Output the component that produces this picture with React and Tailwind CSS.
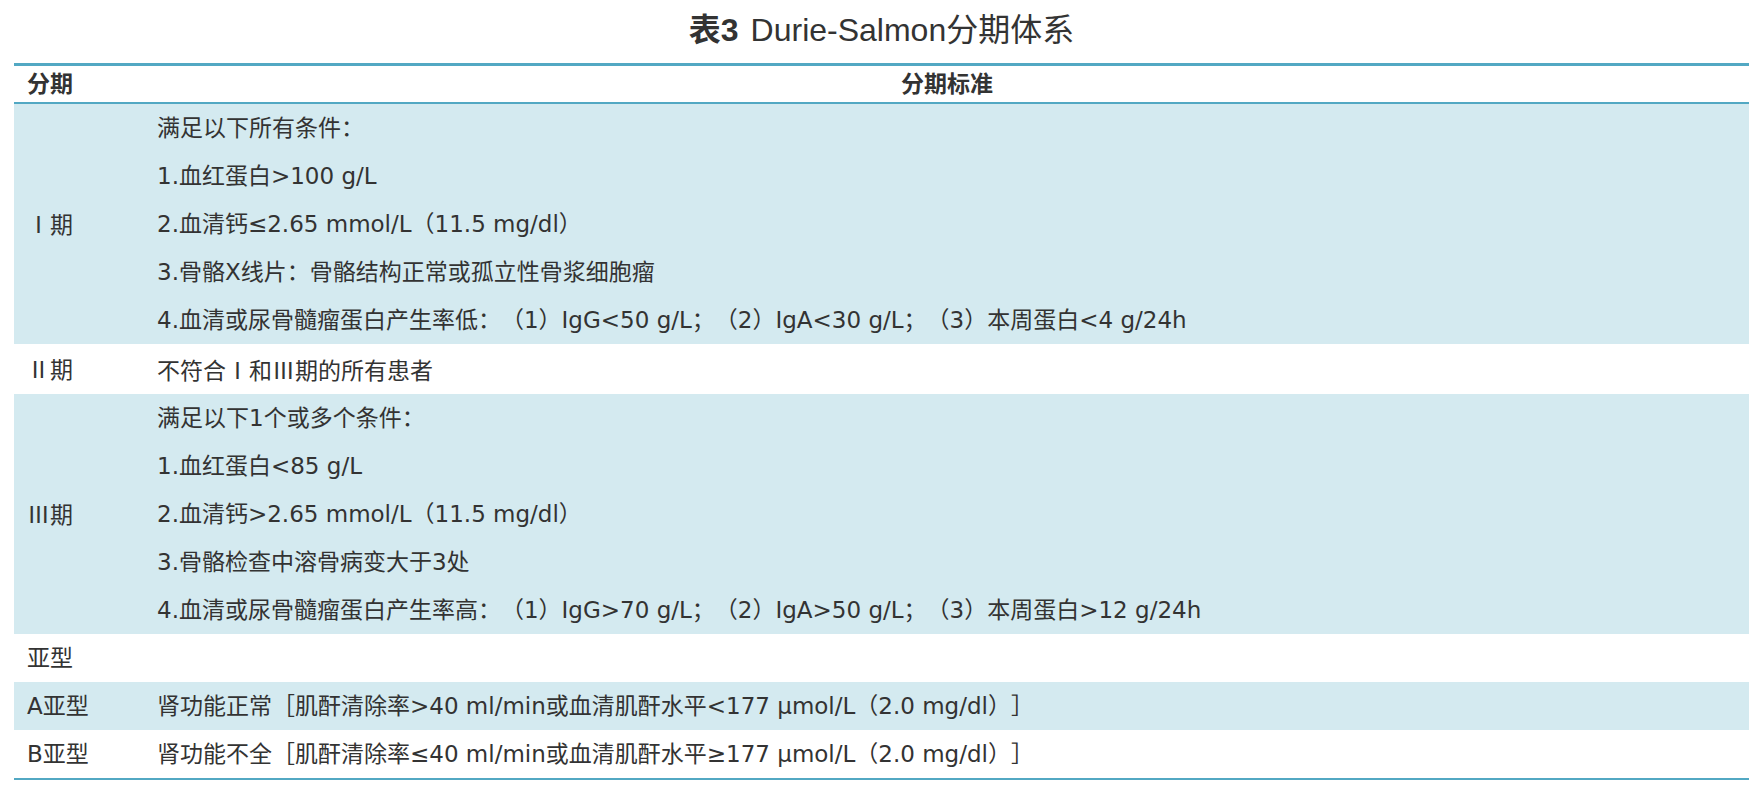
const BODY_FONT = '"DejaVu Sans", "Noto Sans CJK SC", sans-serif'
const CJK_FONT = '"Noto Sans CJK SC", sans-serif'
const TITLE_FONT = '"Liberation Sans", "Noto Sans CJK SC", sans-serif'

const ROWS = [
  {
    stage: 'Ⅰ期',
    shade: true,
    lines: [
      '满足以下所有条件：',
      '1.血红蛋白>100 g/L',
      '2.血清钙≤2.65 mmol/L（11.5 mg/dl）',
      '3.骨骼X线片：骨骼结构正常或孤立性骨浆细胞瘤',
      '4.血清或尿骨髓瘤蛋白产生率低：（1）IgG<50 g/L；（2）IgA<30 g/L；（3）本周蛋白<4 g/24h',
    ],
  },
  { stage: 'Ⅱ期', shade: false, lines: ['不符合Ⅰ和Ⅲ期的所有患者'] },
  {
    stage: 'Ⅲ期',
    shade: true,
    lines: [
      '满足以下1个或多个条件：',
      '1.血红蛋白<85 g/L',
      '2.血清钙>2.65 mmol/L（11.5 mg/dl）',
      '3.骨骼检查中溶骨病变大于3处',
      '4.血清或尿骨髓瘤蛋白产生率高：（1）IgG>70 g/L；（2）IgA>50 g/L；（3）本周蛋白>12 g/24h',
    ],
  },
  { stage: '亚型', shade: false, lines: [''] },
  {
    stage: 'A亚型',
    shade: true,
    lines: ['肾功能正常［肌酐清除率>40 ml/min或血清肌酐水平<177 μmol/L（2.0 mg/dl）］'],
  },
  {
    stage: 'B亚型',
    shade: false,
    lines: ['肾功能不全［肌酐清除率≤40 ml/min或血清肌酐水平≥177 μmol/L（2.0 mg/dl）］'],
  },
]

// roman numerals come from the CJK font so they keep its spacing
function Text({ value }) {
  return value.split(/([ⅠⅡⅢ])/).map((part, i) =>
    /[ⅠⅡⅢ]/.test(part) ? (
      <span key={i} style={{ fontFamily: CJK_FONT }}>
        {part}
      </span>
    ) : (
      part
    )
  )
}

export default function App() {
  return (
    <div
      className="min-h-screen bg-white text-[#333333] [text-spacing-trim:space-all]"
      style={{ fontFamily: BODY_FONT }}
    >
      <div className="ml-[14px] w-[1735px]">
        <h1
          className="flex h-[63px] items-center justify-center pb-[4px] text-[32px] font-normal"
          style={{ fontFamily: TITLE_FONT }}
        >
          <span className="font-bold">表3</span>
          <span className="ml-[12px]">Durie-Salmon分期体系</span>
        </h1>

        <div className="border-t-[3px] border-b-[2px] border-[#52a8c3]">
          <div className="flex h-[36px] items-center text-[23px] font-bold">
            <div className="w-[131px] shrink-0 pl-[13px]">分期</div>
            <div className="flex-1 text-center">分期标准</div>
          </div>
        </div>

        <div className="border-b-[2px] border-[#52a8c3]">
          {ROWS.map((row) => (
            <div
              key={row.stage}
              className={`flex items-center text-[23px] leading-[48px] ${row.shade ? 'bg-[#d4eaf0]' : 'bg-white'}`}
            >
              <div className="w-[131px] shrink-0 pl-[13px]">
                <Text value={row.stage} />
              </div>
              <div className="flex-1 pl-[12px]">
                {row.lines.map((line, i) => (
                  <div key={i} className="h-[48px] whitespace-nowrap">
                    <Text value={line} />
                  </div>
                ))}
              </div>
            </div>
          ))}
        </div>
      </div>
    </div>
  )
}
